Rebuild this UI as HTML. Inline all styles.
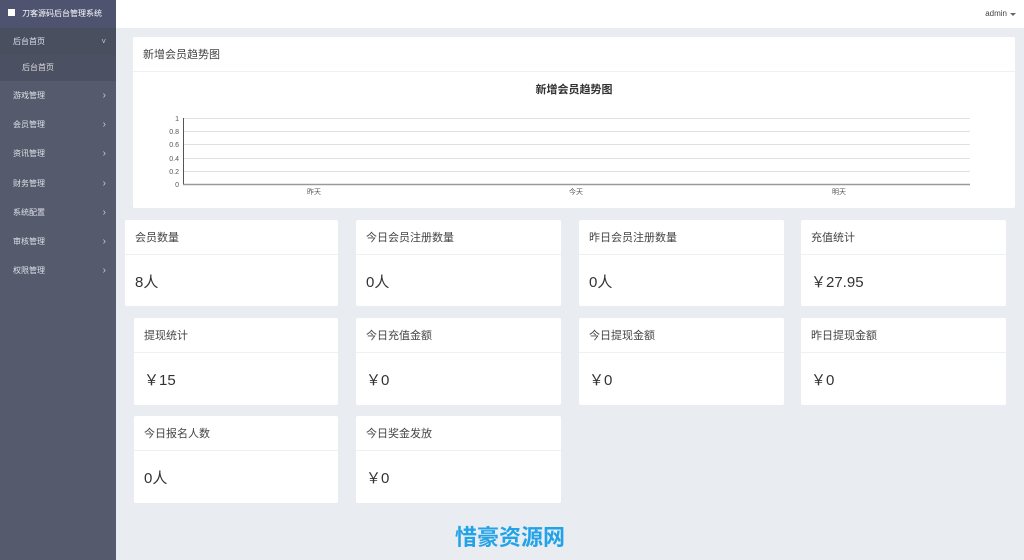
<!DOCTYPE html>
<html><head><meta charset="utf-8"><style>
*{margin:0;padding:0;box-sizing:border-box}
body{width:1024px;height:560px;background:#e9ecf0;font-family:"Liberation Sans","Noto Sans CJK SC",sans-serif;position:relative;overflow:hidden;color:#333}
.side{position:absolute;left:0;top:0;width:116px;height:560px;background:#555a6c}
.logo{height:28px;background:#4e5370;color:#fff;font-size:8px;line-height:28px;padding-left:8px}
.logo i{display:inline-block;width:7px;height:7px;background:#fff;margin-right:7px;vertical-align:-0px}
.it{position:absolute;left:0;width:116px;height:29px;line-height:29px;font-size:8px;color:#dfe1e8;padding-left:13px}
.it:after{content:"›";position:absolute;right:10px;font-size:10px;color:#ccc}
.top{position:absolute;left:116px;top:0;right:0;height:28px;background:#fff}
.top span{position:absolute;right:17px;top:9px;font-size:8px;color:#444}
.top span:after{content:"";position:absolute;right:-9px;top:4px;border:3px solid transparent;border-top-color:#666}
.card{position:absolute;background:#fff;border-radius:2px}
.card .h{height:35px;border-bottom:1px solid #eef0f2;font-size:11px;color:#444;line-height:36px;padding-left:10px}
.card .v{font-size:15px;color:#333;padding-left:10px;line-height:56px}
</style></head><body>
<div class="side">
<div class="logo"><i></i>刀客源码后台管理系统</div>
<div class="it" style="top:28px;height:27px;line-height:27px;background:#4a4f60">后台首页</div>
<div class="it" style="top:55px;height:26px;line-height:26px;background:#4b5063;padding-left:22px;color:#ddd">后台首页</div>
<div class="it" style="top:81px">游戏管理</div>
<div class="it" style="top:110px">会员管理</div>
<div class="it" style="top:139px">资讯管理</div>
<div class="it" style="top:169px">财务管理</div>
<div class="it" style="top:198px">系统配置</div>
<div class="it" style="top:227px">审核管理</div>
<div class="it" style="top:256px">权限管理</div>
</div>
<style>.side .it:nth-child(2):after{content:"˅";font-size:8px}.side .it:nth-child(3):after{content:""}</style>
<div class="top"><span>admin</span></div>
<div class="card" style="left:133px;top:37px;width:882px;height:171px">
<div class="h" style="font-size:11px">新增会员趋势图</div>
<svg width="882" height="136" style="position:absolute;left:0;top:35px" font-family="Liberation Sans,Noto Sans CJK SC,sans-serif">
<text x="441" y="21" text-anchor="middle" font-size="11" font-weight="bold" fill="#333">新增会员趋势图</text>
<g stroke="#e0e0e0" stroke-width="1">
<line x1="50" y1="46.5" x2="837" y2="46.5"/><line x1="50" y1="59.5" x2="837" y2="59.5"/><line x1="50" y1="72.5" x2="837" y2="72.5"/><line x1="50" y1="86.5" x2="837" y2="86.5"/><line x1="50" y1="99.5" x2="837" y2="99.5"/></g>
<line x1="50.5" y1="46" x2="50.5" y2="113" stroke="#555"/>
<line x1="50" y1="112.5" x2="837" y2="112.5" stroke="#999" stroke-width="1.5"/>
<g font-size="7" fill="#555" text-anchor="end">
<text x="46" y="49">1</text><text x="46" y="62">0.8</text><text x="46" y="75">0.6</text><text x="46" y="89">0.4</text><text x="46" y="102">0.2</text><text x="46" y="115">0</text></g>
<g font-size="7" fill="#555" text-anchor="middle"><text x="181" y="122">昨天</text><text x="443" y="122">今天</text><text x="706" y="122">明天</text></g>
</svg></div>
<div class="card" style="left:125px;top:220px;width:213px;height:86px"><div class="h">会员数量</div><div class="v">8人</div></div>
<div class="card" style="left:356px;top:220px;width:205px;height:86px"><div class="h">今日会员注册数量</div><div class="v">0人</div></div>
<div class="card" style="left:579px;top:220px;width:205px;height:86px"><div class="h">昨日会员注册数量</div><div class="v">0人</div></div>
<div class="card" style="left:801px;top:220px;width:205px;height:86px"><div class="h">充值统计</div><div class="v">￥27.95</div></div>
<div class="card" style="left:134px;top:318px;width:204px;height:87px"><div class="h">提现统计</div><div class="v">￥15</div></div>
<div class="card" style="left:356px;top:318px;width:205px;height:87px"><div class="h">今日充值金额</div><div class="v">￥0</div></div>
<div class="card" style="left:579px;top:318px;width:205px;height:87px"><div class="h">今日提现金额</div><div class="v">￥0</div></div>
<div class="card" style="left:801px;top:318px;width:205px;height:87px"><div class="h">昨日提现金额</div><div class="v">￥0</div></div>
<div class="card" style="left:134px;top:416px;width:204px;height:87px"><div class="h">今日报名人数</div><div class="v">0人</div></div>
<div class="card" style="left:356px;top:416px;width:205px;height:87px"><div class="h">今日奖金发放</div><div class="v">￥0</div></div>
<div style="position:absolute;left:455px;top:520px;font-size:22px;font-weight:bold;color:#22a3e8;letter-spacing:0px">惜豪资源网</div>
</body></html>
